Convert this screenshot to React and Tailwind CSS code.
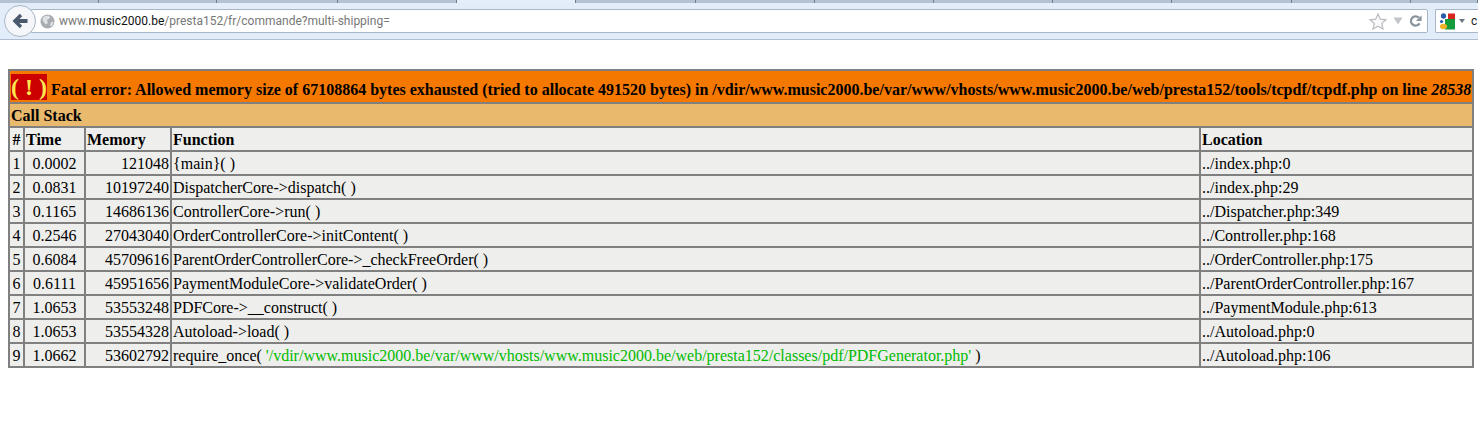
import React from "react";

const tabStops = [99, 118, 121, 119, 119, 120, 119, 119, 119, 119, 120, 119, 67];

const rows = [
  ["1", "0.0002", "121048", "{main}( )", "../index.php:0"],
  ["2", "0.0831", "10197240", "DispatcherCore->dispatch( )", "../index.php:29"],
  ["3", "0.1165", "14686136", "ControllerCore->run( )", "../Dispatcher.php:349"],
  ["4", "0.2546", "27043040", "OrderControllerCore->initContent( )", "../Controller.php:168"],
  ["5", "0.6084", "45709616", "ParentOrderControllerCore->_checkFreeOrder( )", "../OrderController.php:175"],
  ["6", "0.6111", "45951656", "PaymentModuleCore->validateOrder( )", "../ParentOrderController.php:167"],
  ["7", "1.0653", "53553248", "PDFCore->__construct( )", "../PaymentModule.php:613"],
  ["8", "1.0653", "53554328", "Autoload->load( )", "../Autoload.php:0"],
];

const cell = "border border-[#808080] px-px pt-[2px] pb-0 h-[24px] leading-[18px] bg-[#eeeeec]";

const BrowserBar = () => (
  <div>
    {/* Tab strip */}
    <div className="flex h-[3px] bg-[#9fb0c4]">
      {tabStops.map((w, i) => (
        <div
          key={i}
          style={{ width: w }}
          className={`h-full border-r border-[#6f7f90] ${i === 4 ? "bg-[#e4eefa]" : "bg-[#b4c3d4]"}`}
        />
      ))}
    </div>

    {/* Toolbar */}
    <div className="flex items-center h-[37px] bg-[#e3edf9] border-b border-[#aebdd0] pl-[4px] pr-0 [font-family:'Roboto',sans-serif]">
      <div className="relative z-10 flex items-center justify-center w-[32px] h-[32px] rounded-full bg-[#f4f6f9] border border-[#a9b6c6] shrink-0">
        <svg width="16" height="16" viewBox="0 0 16 16">
          <path d="M7.8 0.8 L0.5 8 L7.8 15.2 L10.2 12.8 L7.4 10 H15.5 V6 H7.4 L10.2 3.2 Z" fill="#4a5a6c" />
        </svg>
      </div>
      <div className="flex items-center flex-1 h-[24px] -ml-[5px] bg-white border border-[#a9b6c6] rounded-r-[2px] pl-[8px] pr-[5px]">
        <svg width="15" height="15" viewBox="0 0 15 15" className="shrink-0">
          <circle cx="7.5" cy="7.5" r="7" fill="#a9adb2" />
          <path d="M5 2 L9 1.5 L10 4 L7 6 L8 9 L5.5 10.5 L3 7 L2.5 4 Z M11 8 L13.5 8 L12 12 L10 12 Z" fill="#dfe2e5" />
        </svg>
        <div className="ml-[4px] text-[12px] text-[#777] leading-none whitespace-nowrap">
          www.<span className="text-[#111]">music2000.be</span>/presta152/fr/commande?multi-shipping=
        </div>
        <div className="flex items-center gap-[6px] ml-auto">
          <svg width="18" height="17" viewBox="0 0 18 17">
            <path d="M9 1 L11.3 6.2 L17 6.8 L12.7 10.5 L14 16 L9 13.2 L4 16 L5.3 10.5 L1 6.8 L6.7 6.2 Z" fill="#fafafa" stroke="#b9bcc0" strokeWidth="1.2" />
          </svg>
          <svg width="10" height="8" viewBox="0 0 10 8">
            <path d="M0.5 0.5 H9.5 L5 7.5 Z" fill="#c2c6ca" />
          </svg>
          <svg width="13" height="14" viewBox="0 0 14 14">
            <path d="M11.4 9.5 A5 5 0 1 1 10.6 3.4" fill="none" stroke="#8b949d" strokeWidth="2.4" />
            <path d="M13.5 0.8 V7 H7.5 Z" fill="#8b949d" />
          </svg>
        </div>
      </div>
      <div className="flex items-center w-[43px] h-[24px] ml-[7px] bg-white border border-r-0 border-[#a9b6c6] rounded-l-[2px] pl-[3px] shrink-0 overflow-hidden">
        <svg width="17" height="17" viewBox="0 0 17 17" className="shrink-0">
          <rect x="9" y="0.5" width="7" height="6" fill="#d9251d" />
          <rect x="6" y="6" width="10" height="10.5" fill="#149b3c" />
          <ellipse cx="4.5" cy="3" rx="2.6" ry="2.8" fill="#2a5aa8" />
          <circle cx="2.5" cy="8.5" r="1.6" fill="#2a5aa8" />
          <ellipse cx="4.5" cy="13.5" rx="3.6" ry="2.8" fill="#eeb32b" />
        </svg>
        <svg width="6" height="4" viewBox="0 0 6 4" className="ml-[3px] shrink-0">
          <path d="M0 0 H6 L3 4 Z" fill="#6b7480" />
        </svg>
        <span className="ml-[6px] text-[12px] leading-none text-[#222]">c</span>
      </div>
    </div>
  </div>
);

const App = () => {
  return (
    <div className="w-[1478px] h-[434px] overflow-hidden bg-white">
      <BrowserBar />

      <div className="pl-[8px] pt-[29px]">
        <table className="w-[1466px] table-fixed border-separate border-spacing-0 border border-[#808080] text-[16px] text-black [font-family:'Liberation_Serif',serif]">
          <colgroup>
            <col className="w-[15px]" />
            <col className="w-[61px]" />
            <col className="w-[86px]" />
            <col className="w-[1029px]" />
            <col className="w-[273px]" />
          </colgroup>
          <tbody>
            <tr>
              <th colSpan={5} className="border border-[#808080] bg-[#f57900] h-[33px] px-px pt-[4px] pb-0 text-left font-bold whitespace-nowrap leading-[24px]">
                <span className="text-[24px] bg-[#cc0000] text-[#fce94f]">( ! )</span>{" "}
                Fatal error: Allowed memory size of 67108864 bytes exhausted (tried to allocate 491520 bytes) in /vdir/www.music2000.be/var/www/vhosts/www.music2000.be/web/presta152/tools/tcpdf/tcpdf.php on line <i>28538</i>
              </th>
            </tr>
            <tr>
              <th colSpan={5} className="border border-[#808080] bg-[#e9b96e] h-[24px] px-px pt-[2px] pb-0 text-left font-bold leading-[18px]">Call Stack</th>
            </tr>
            <tr>
              <th className={`${cell} text-center font-bold`}>#</th>
              <th className={`${cell} text-left font-bold`}>Time</th>
              <th className={`${cell} text-left font-bold`}>Memory</th>
              <th className={`${cell} text-left font-bold`}>Function</th>
              <th className={`${cell} text-left font-bold`}>Location</th>
            </tr>
            {rows.map((r) => (
              <tr key={r[0]}>
                <td className={`${cell} text-center`}>{r[0]}</td>
                <td className={`${cell} text-center`}>{r[1]}</td>
                <td className={`${cell} text-right`}>{r[2]}</td>
                <td className={cell}>{r[3]}</td>
                <td className={cell}>{r[4]}</td>
              </tr>
            ))}
            <tr>
              <td className={`${cell} text-center`}>9</td>
              <td className={`${cell} text-center`}>1.0662</td>
              <td className={`${cell} text-right`}>53602792</td>
              <td className={cell}>
                require_once( <span className="text-[#00bb00]">'/vdir/www.music2000.be/var/www/vhosts/www.music2000.be/web/presta152/classes/pdf/PDFGenerator.php'</span> )
              </td>
              <td className={cell}>../Autoload.php:106</td>
            </tr>
          </tbody>
        </table>
      </div>
    </div>
  );
};

export default App;
